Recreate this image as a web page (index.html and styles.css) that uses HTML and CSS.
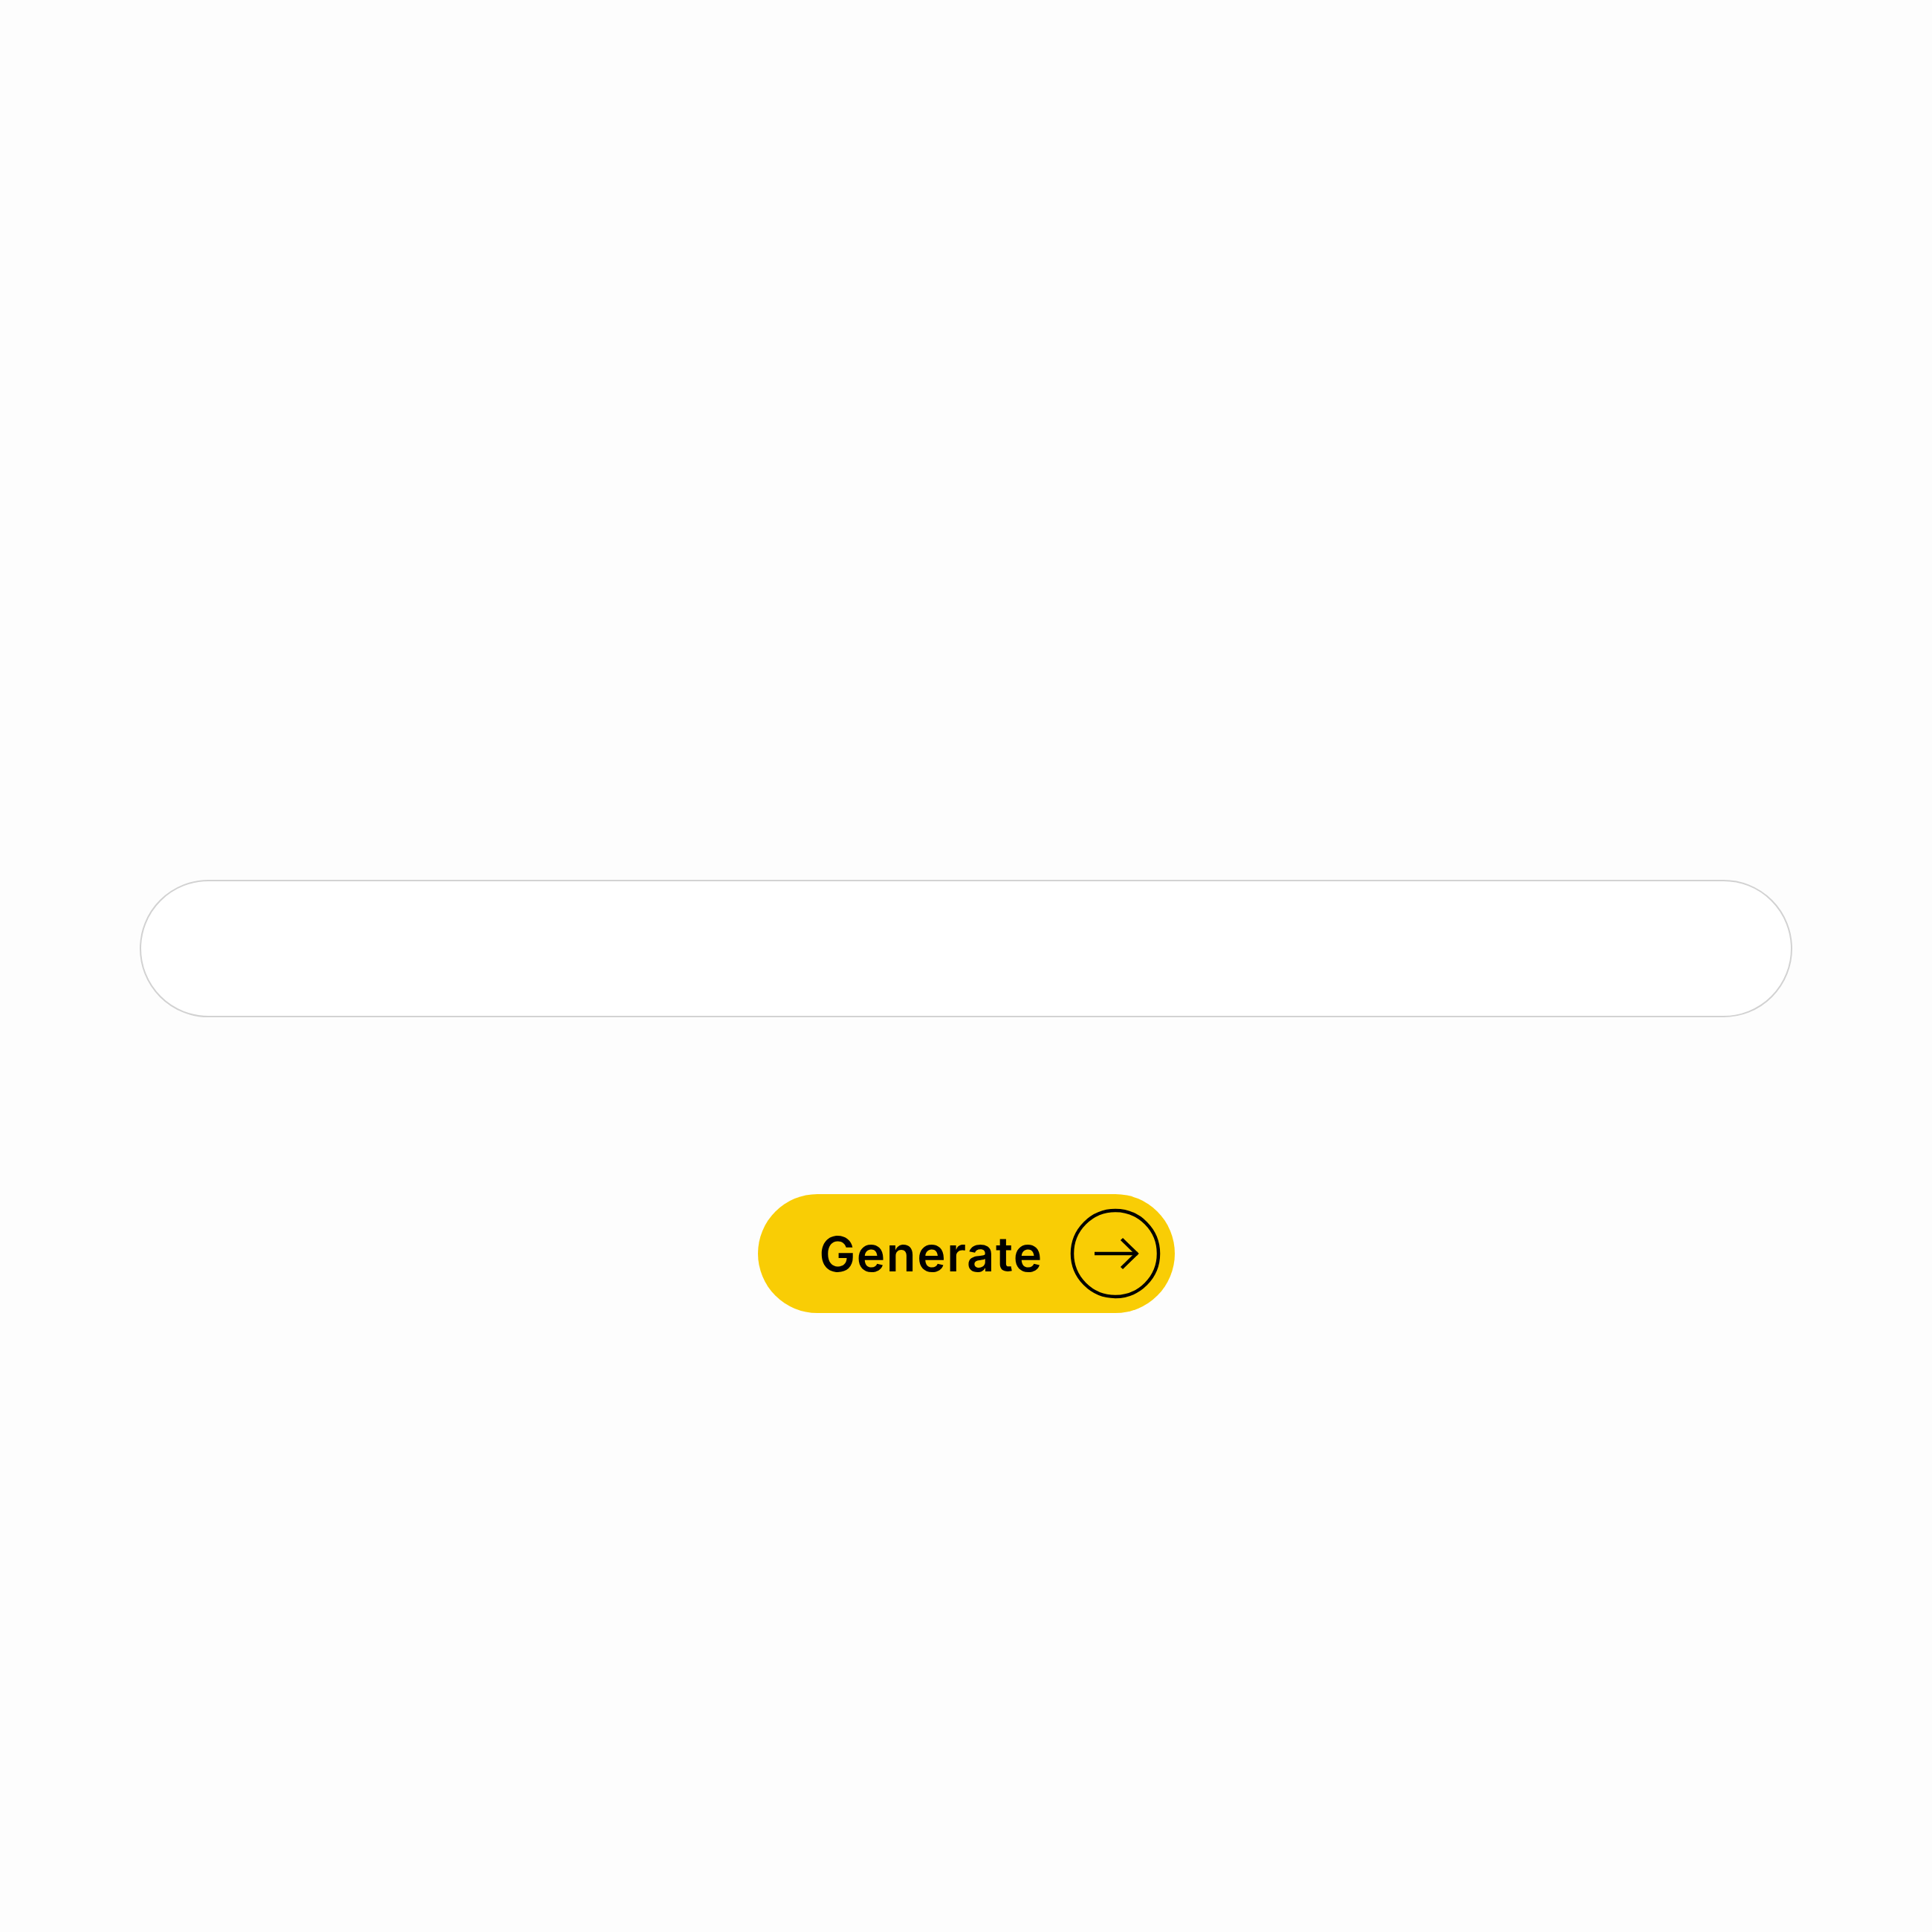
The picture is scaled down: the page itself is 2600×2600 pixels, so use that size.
FILE: index.html
```html
<!DOCTYPE html>
<html lang="en">
<head>
<meta charset="utf-8">
<title>Generate</title>
<link rel="stylesheet" href="styles.css">
</head>
<body>
<main class="page">
  <form class="form">
    <input class="prompt" type="text" aria-label="Prompt">
    <button class="generate" type="button">
      <span class="generate__label">Generate</span>
      <span class="generate__icon">
        <svg width="122" height="122" viewBox="0 0 122 122" aria-hidden="true">
          <circle cx="61" cy="61" r="58" fill="none" stroke="#000" stroke-width="4.5"/>
          <path d="M33 61 H91" fill="none" stroke="#000" stroke-width="4.5"/>
          <path d="M69.5 41.5 L89.5 61 L69.5 80.5" fill="none" stroke="#000" stroke-width="4.5"/>
        </svg>
      </span>
    </button>
  </form>
</main>
</body>
</html>
```
FILE: styles.css
```css
html, body {
  margin: 0;
  padding: 0;
  background: #fdfdfd;
}

.page {
  width: 2600px;
  height: 2600px;
  box-sizing: border-box;
  padding-top: 1184px;
}

.form {
  display: flex;
  flex-direction: column;
  align-items: center;
}

.prompt {
  box-sizing: border-box;
  width: 2224px;
  height: 185px;
  border: 2px solid #d2d2d2;
  border-radius: 93px;
  background: #ffffff;
  outline: none;
  padding: 0 90px;
  font-family: "Inter", "Liberation Sans", sans-serif;
  font-size: 48px;
}

.generate {
  margin-top: 238px;
  box-sizing: border-box;
  width: 561px;
  height: 160px;
  border: none;
  border-radius: 80px;
  background: #f9cd05;
  display: flex;
  align-items: center;
  padding: 0 19px 0 83px;
  cursor: pointer;
  color: #000;
}

.generate__label {
  font-family: "Inter", "Liberation Sans", sans-serif;
  font-weight: 600;
  font-size: 65px;
  letter-spacing: 1.6px;
  line-height: 1;
  flex: 1;
  text-align: left;
}

.generate__icon {
  display: flex;
  width: 122px;
  height: 122px;
}
```
